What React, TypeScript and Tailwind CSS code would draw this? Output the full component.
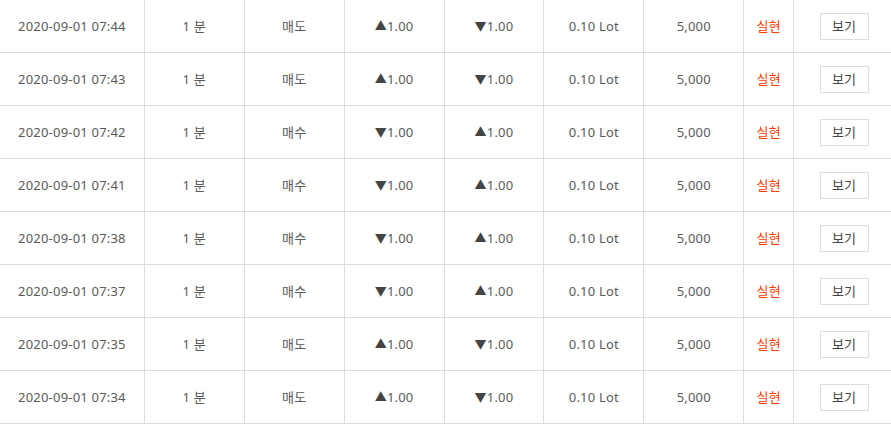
import React from 'react';

type Row = { time: string; side: '매도' | '매수' };

const rows: Row[] = [
  { time: '2020-09-01 07:44', side: '매도' },
  { time: '2020-09-01 07:43', side: '매도' },
  { time: '2020-09-01 07:42', side: '매수' },
  { time: '2020-09-01 07:41', side: '매수' },
  { time: '2020-09-01 07:38', side: '매수' },
  { time: '2020-09-01 07:37', side: '매수' },
  { time: '2020-09-01 07:35', side: '매도' },
  { time: '2020-09-01 07:34', side: '매도' },
];

const Cell = ({ w, children, last }: { w: string; children: React.ReactNode; last?: boolean }) => (
  <div className={`${w} flex items-center justify-center pt-[2px] ${last ? '' : 'border-r border-[#dddddd]'}`}>{children}</div>
);

const Up = () => <span className="text-[#444] text-[12px]">▲</span>;
const Down = () => <span className="text-[#444] text-[12px]">▼</span>;

export default function App() {
  return (
    <div
      className="w-[891px] h-[426px] bg-white overflow-hidden text-[13px] tracking-[0.2px] text-[#5a5a5a]"
      style={{ fontFamily: '"Noto Sans", "Noto Sans CJK KR", sans-serif' }}
    >
      {rows.map((r) => {
        const sell = r.side === '매도';
        return (
          <div key={r.time} className="flex h-[53px] border-b border-[#dddddd]">
            <Cell w="w-[145px]">{r.time}</Cell>
            <Cell w="w-[100px]">1 분</Cell>
            <Cell w="w-[100px]">{r.side}</Cell>
            <Cell w="w-[100px]">
              {sell ? <Up /> : <Down />}1.00
            </Cell>
            <Cell w="w-[100px]">
              {sell ? <Down /> : <Up />}1.00
            </Cell>
            <Cell w="w-[100px]">0.10 Lot</Cell>
            <Cell w="w-[100px]">5,000</Cell>
            <Cell w="w-[50px]">
              <span className="text-[#ff3c00]">실현</span>
            </Cell>
            <Cell w="w-[97px]" last>
              <button className="ml-[3px] -mt-[2px] w-[49px] h-[27px] border border-[#dddddd] bg-white text-[#444] text-[13px] pt-[1px]">
                보기
              </button>
            </Cell>
          </div>
        );
      })}
    </div>
  );
}
